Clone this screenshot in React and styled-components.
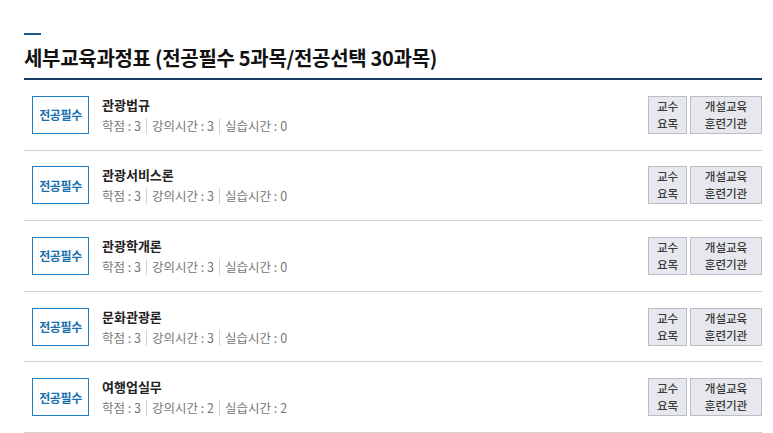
import React from "react";
import styled, { createGlobalStyle } from "styled-components";

const Global = createGlobalStyle`
  html, body { margin: 0; padding: 0; background: #fff; }
  body { font-family: "Noto Sans CJK KR", "Noto Sans", sans-serif; color: #222; }
`;

const Page = styled.div`
  width: 738px;
  padding: 33px 0 0 24px;
`;

const Accent = styled.div`
  width: 17px;
  height: 2px;
  background: #1a5a8c;
`;

const Title = styled.h2`
  margin: 0;
  padding: 8px 0 6px;
  font-size: 20px;
  line-height: 29px;
  font-weight: 700;
  color: #111;
  letter-spacing: -0.3px;
  border-bottom: 2px solid #163a63;
`;

const List = styled.ul`
  list-style: none;
  margin: 0;
  padding: 0;
`;

const Row = styled.li`
  display: flex;
  align-items: center;
  height: 69.6px;
  padding: 0 0 0 8px;
  border-bottom: 1px solid #cfcfcf;
`;

const Badge = styled.span`
  box-sizing: border-box;
  width: 57px;
  height: 38px;
  display: flex;
  align-items: center;
  justify-content: center;
  border: 1px solid #1a7cc2;
  color: #1a6fae;
  font-size: 12px;
  font-weight: 700;
  letter-spacing: -0.4px;
`;

const Info = styled.div`
  flex: 1;
  display: flex;
  flex-direction: column;
  margin-left: 13px;
  gap: 4px;
`;

const Name = styled.div`
  font-size: 13px;
  font-weight: 700;
  color: #222;
  line-height: 18px;
`;

const Meta = styled.div`
  display: flex;
  align-items: center;
  font-size: 12.5px;
  color: #777;
  line-height: 16px;
`;

const MetaItem = styled.span`
  & + & {
    margin-left: 5px;
    padding-left: 5px;
    border-left: 1px solid #d4d4d4;
  }
`;

const Actions = styled.div`
  display: flex;
  gap: 3px;
`;

const Btn = styled.button`
  box-sizing: border-box;
  width: ${(p) => p.$w}px;
  height: 38px;
  padding: 0;
  display: flex;
  flex-direction: column;
  align-items: center;
  justify-content: center;
  border: 1px solid #b9bec6;
  background: #e6e8ed;
  color: #3a3a3a;
  font-family: inherit;
  font-size: 11.6px;
  font-weight: 500;
  letter-spacing: -0.1px;
  cursor: pointer;
`;

const BtnLine = styled.span`
  display: block;
  line-height: 17px;
`;

const courses = [
  { name: "관광법규", credit: 3, lecture: 3, practice: 0 },
  { name: "관광서비스론", credit: 3, lecture: 3, practice: 0 },
  { name: "관광학개론", credit: 3, lecture: 3, practice: 0 },
  { name: "문화관광론", credit: 3, lecture: 3, practice: 0 },
  { name: "여행업실무", credit: 3, lecture: 2, practice: 2 },
];

export default function App() {
  return (
    <>
      <Global />
      <Page>
        <Accent />
        <Title>세부교육과정표 (전공필수 5과목/전공선택 30과목)</Title>
        <List>
          {courses.map((c) => (
            <Row key={c.name}>
              <Badge>전공필수</Badge>
              <Info>
                <Name>{c.name}</Name>
                <Meta>
                  <MetaItem>학점 : {c.credit}</MetaItem>
                  <MetaItem>강의시간 : {c.lecture}</MetaItem>
                  <MetaItem>실습시간 : {c.practice}</MetaItem>
                </Meta>
              </Info>
              <Actions>
                <Btn $w={39}>
                  <BtnLine>교수</BtnLine>
                  <BtnLine>요목</BtnLine>
                </Btn>
                <Btn $w={72}>
                  <BtnLine>개설교육</BtnLine>
                  <BtnLine>훈련기관</BtnLine>
                </Btn>
              </Actions>
            </Row>
          ))}
        </List>
      </Page>
    </>
  );
}
